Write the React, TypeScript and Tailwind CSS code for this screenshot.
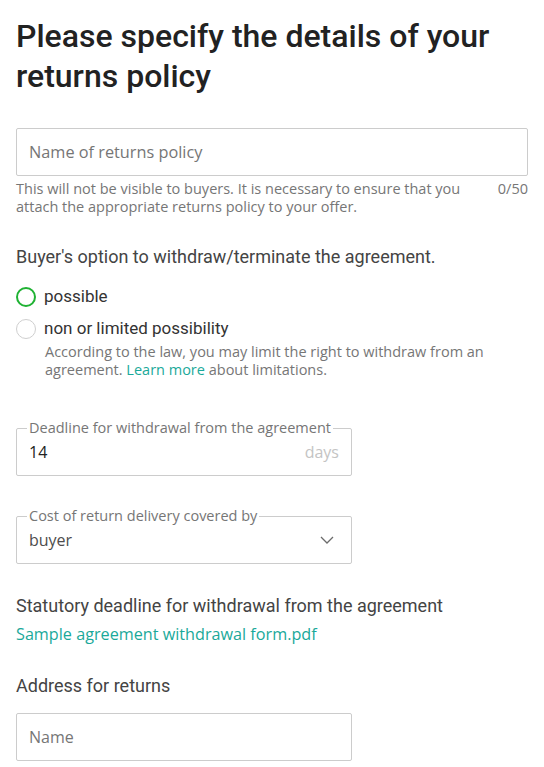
import React from "react";

function Chevron() {
  return (
    <svg width="14" height="8" viewBox="0 0 14 8" fill="none">
      <path d="M1 1l6 6 6-6" stroke="#6b6b6b" strokeWidth="1.3" />
    </svg>
  );
}

function Radio({ checked, label }: { checked?: boolean; label: string }) {
  return (
    <div className="flex items-center h-[24px]">
      <span
        className={
          checked
            ? "w-[20px] h-[20px] rounded-full border-2 border-[#1fb233] box-border"
            : "w-[20px] h-[20px] rounded-full border border-[#cfcfcf] box-border"
        }
      />
      <span className="ml-[8px] font-['Roboto',sans-serif] text-[17px] text-[#333]">{label}</span>
    </div>
  );
}

function OutlinedField({ label, children }: { label: string; children: React.ReactNode }) {
  return (
    <div className="relative w-[336px] h-[48px] border border-[#cccccc] rounded-[2px] flex items-center px-[12px]">
      <span className="absolute left-[10px] -top-[11px] bg-white px-[2px] font-['Open_Sans',sans-serif] text-[14.5px] leading-[20px] text-[#767676]">
        {label}
      </span>
      {children}
    </div>
  );
}

export default function App() {
  return (
    <div className="w-[544px] min-h-[767px] bg-white px-4 pt-4 font-['Open_Sans',sans-serif]">
      <h1 className="font-['Roboto',sans-serif] text-[32px] leading-[40px] font-medium text-[#222] w-[510px]">
        Please specify the details of your returns policy
      </h1>

      <div className="mt-8 h-[48px] border border-[#cccccc] rounded-[2px] flex items-center px-[12px]">
        <span className="text-[16.3px] text-[#767676]">Name of returns policy</span>
      </div>
      <div className="mt-1 flex justify-between text-[14.5px] leading-[18px] text-[#767676]">
        <p className="w-[460px]">
          This will not be visible to buyers. It is necessary to ensure that you attach the appropriate returns policy to your offer.
        </p>
        <span>0/50</span>
      </div>

      <h2 className="mt-[29px] font-['Roboto',sans-serif] text-[18px] leading-[24px] text-[#444]">
        Buyer's option to withdraw/terminate the agreement.
      </h2>

      <div className="mt-4 flex flex-col gap-2">
        <Radio checked label="possible" />
        <Radio label="non or limited possibility" />
      </div>
      <p className="ml-[29px] mt-[2px] w-[460px] text-[14.5px] leading-[18px] text-[#767676]">
        According to the law, you may limit the right to withdraw from an agreement.{" "}
        <a className="text-[#1aa99a]">Learn more</a> about limitations.
      </p>

      <div className="mt-[49px] flex flex-col gap-10">
        <OutlinedField label="Deadline for withdrawal from the agreement">
          <span className="text-[16px] text-[#222]">14</span>
          <span className="ml-auto text-[16px] text-[#c4c4c4]">days</span>
        </OutlinedField>
        <OutlinedField label="Cost of return delivery covered by">
          <span className="text-[16px] text-[#4d4d4d]">buyer</span>
          <span className="ml-auto mr-[5px] flex items-center">
            <Chevron />
          </span>
        </OutlinedField>
      </div>

      <h2 className="mt-[30px] font-['Roboto',sans-serif] text-[18px] leading-[24px] text-[#444]">
        Statutory deadline for withdrawal from the agreement
      </h2>
      <a className="block mt-[4px] text-[16.2px] leading-[24px] text-[#1aa99a]">
        Sample agreement withdrawal form.pdf
      </a>

      <h2 className="mt-[28px] font-['Roboto',sans-serif] text-[18px] leading-[24px] text-[#444]">
        Address for returns
      </h2>
      <div className="mt-[15px] w-[336px] h-[48px] border border-[#cccccc] rounded-[2px] flex items-center px-[12px]">
        <span className="text-[16px] text-[#767676]">Name</span>
      </div>
    </div>
  );
}
